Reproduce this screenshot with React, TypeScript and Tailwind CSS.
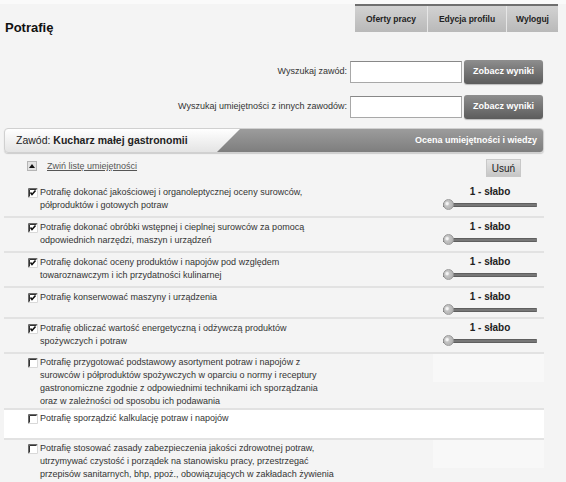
import React from 'react'

interface Skill {
  lines: string[]
  checked: boolean
  white?: boolean
}

const SKILLS: Skill[] = [
  {
    lines: ['Potrafię dokonać jakościowej i organoleptycznej oceny surowców,', 'półproduktów i gotowych potraw'],
    checked: true,
  },
  {
    lines: ['Potrafię dokonać obróbki wstępnej i cieplnej surowców za pomocą', 'odpowiednich narzędzi, maszyn i urządzeń'],
    checked: true,
  },
  {
    lines: ['Potrafię dokonać oceny produktów i napojów pod względem', 'towaroznawczym i ich przydatności kulinarnej'],
    checked: true,
  },
  { lines: ['Potrafię konserwować maszyny i urządzenia'], checked: true },
  {
    lines: ['Potrafię obliczać wartość energetyczną i odżywczą produktów', 'spożywczych i potraw'],
    checked: true,
  },
  {
    lines: [
      'Potrafię przygotować podstawowy asortyment potraw i napojów z',
      'surowców i półproduktów spożywczych w oparciu o normy i receptury',
      'gastronomiczne zgodnie z odpowiednimi technikami ich sporządzania',
      'oraz w zależności od sposobu ich podawania',
    ],
    checked: false,
  },
  { lines: ['Potrafię sporządzić kalkulację potraw i napojów'], checked: false, white: true },
  {
    lines: [
      'Potrafię stosować zasady zabezpieczenia jakości zdrowotnej potraw,',
      'utrzymywać czystość i porządek na stanowisku pracy, przestrzegać',
      'przepisów sanitarnych, bhp, ppoż., obowiązujących w zakładach żywienia',
      'zbiorowego',
    ],
    checked: false,
  },
]

function Checkbox({ checked }: { checked: boolean }) {
  return (
    <svg width="10" height="10" viewBox="0 0 10 10" className="mt-[1.5px] shrink-0">
      <rect x="0" y="0" width="10" height="10" fill="#fff" />
      <path d="M0.5 9.5V0.5H9.5" fill="none" stroke="#6a6a6a" strokeWidth="1" />
      <path d="M1.5 8.5V1.5H8.5" fill="none" stroke="#333" strokeWidth="1" />
      <path d="M9.5 0.5V9.5H0.5" fill="none" stroke="#d8d8d8" strokeWidth="1" />
      {checked && <path d="M2.5 4.5L4 6.5L7.5 2.5" fill="none" stroke="#111" strokeWidth="1.6" />}
    </svg>
  )
}

function Slider() {
  return (
    <div className="flex w-[111px] shrink-0 flex-col pl-[10px] pr-[7px] pt-[2px]">
      <div className="text-center text-[10px] font-bold leading-[13px] text-[#222]">1 - słabo</div>
      <div className="relative flex h-[13px] items-center">
        <div className="h-[4px] w-full rounded-r-[1px] border-y border-[#5f5f5f] bg-[#777]" />
        <div className="absolute left-0 top-[1px] h-[11px] w-[11px] rounded-full border border-[#9a9a9a] bg-[radial-gradient(circle_at_35%_40%,#f4f4f4_0,#f4f4f4_12%,#c4c4c4_30%,#a8a8a8_100%)]" />
      </div>
    </div>
  )
}

export default function App() {
  return (
    <div className="h-[482px] w-[566px] overflow-hidden bg-[#f4f4f4] font-['Liberation_Sans',Arial,sans-serif] text-[#333]">
      {/* nagłówek */}
      <div className="h-[4px] bg-[#fafafa]" />
      <div className="flex h-[56px] items-start justify-between">
        <h1 className="pl-[5px] pt-[16px] text-[13px] font-bold leading-[16px] text-[#111]">Potrafię</h1>
        <div className="mr-[8px] flex h-[28px] border-t-2 border-[#6f6f6f] text-[8.5px] font-bold text-[#222]">
          <div className="flex w-[73px] items-center justify-center border-r border-[#e6e6e6] bg-gradient-to-b from-[#d2d2d2] to-[#b9b9b9]">
            Oferty pracy
          </div>
          <div className="flex w-[79px] items-center justify-center border-r border-[#e6e6e6] bg-gradient-to-b from-[#d2d2d2] to-[#b9b9b9]">
            Edycja profilu
          </div>
          <div className="flex w-[51px] items-center justify-center bg-gradient-to-b from-[#d2d2d2] to-[#b9b9b9]">
            Wyloguj
          </div>
        </div>
      </div>

      {/* wyszukiwanie */}
      <div className="flex flex-col gap-[11px] pr-[23px]">
        {['Wyszukaj zawód:', 'Wyszukaj umiejętności z innych zawodów:'].map((label) => (
          <div key={label} className="flex h-[24px] items-center justify-end">
            <span className="mr-[3px] text-[9px]">{label}</span>
            <div className="h-[22px] w-[112px] border border-[#a8a8a8] border-t-[#888] bg-white" />
            <button className="ml-[2px] h-[24px] w-[79px] rounded-[3px] bg-gradient-to-b from-[#8e8e8e] to-[#5c5c5c] text-[9px] font-bold text-white shadow-[0_1px_1px_#bbb]">
              Zobacz wyniki
            </button>
          </div>
        ))}
      </div>

      <div className="mx-[4px] mt-[9px] w-[540px]">
        {/* pasek zawodu */}
        <div className="flex h-[25px] overflow-hidden rounded-[4px] border border-[#d0d0d0] bg-gradient-to-b from-white to-[#e4e4e4] shadow-[0_1px_1px_#ccc]">
          <div className="flex flex-1 items-center pl-[11px] text-[10.5px] text-[#222]">
            Zawód:&nbsp;<span className="font-bold">Kucharz małej gastronomii</span>
          </div>
          <div className="flex w-[326px] items-center justify-end bg-gradient-to-b from-[#9c9c9c] to-[#7e7e7e] pr-[6px] text-[9px] font-bold text-white [clip-path:polygon(23px_0,100%_0,100%_100%,0_100%)]">
            Ocena umiejętności i wiedzy
          </div>
        </div>

        {/* zwiń */}
        <div className="flex h-[30px] items-start justify-between pl-[23px] pr-[23px]">
          <div className="flex items-center pt-[7px]">
            <div className="flex h-[10px] w-[10px] items-center justify-center border border-[#b5b5b5] bg-[#e2e2e2]">
              <svg width="6" height="4" viewBox="0 0 6 4">
                <path d="M3 0L6 4H0Z" fill="#111" />
              </svg>
            </div>
            <span className="ml-[10px] text-[9px] leading-[12px] text-[#555] underline">Zwiń listę umiejętności</span>
          </div>
          <button className="mt-[6px] h-[18px] w-[35px] border border-[#c8c8c8] bg-gradient-to-b from-[#e4e4e4] to-[#c6c6c6] text-[10px] text-[#222]">
            Usuń
          </button>
        </div>

        {/* lista umiejętności */}
        {SKILLS.map((s, idx) => {
          const pad = s.checked ? (s.lines.length > 1 ? 'pb-[4px]' : 'pb-[1px]') : 'pb-0'
          return (
            <div
              key={idx}
              className={`flex items-start justify-between border-b-2 border-[#e2e2e2] ${pad} ${s.white ? 'bg-white' : ''}`}
            >
              <div className={`flex gap-[2px] pl-[24px] ${s.checked ? 'mt-[3px]' : 'mt-[2px]'}`}>
                <Checkbox checked={s.checked} />
                <div className="whitespace-nowrap text-[9px] leading-[13px]">
                  {s.lines.map((l) => (
                    <div key={l}>{l}</div>
                  ))}
                </div>
              </div>
              {s.checked ? (
                <Slider />
              ) : (
                <div className={`h-[28px] w-[111px] shrink-0 ${s.white ? '' : 'bg-[#f8f8f8]'}`} />
              )}
            </div>
          )
        })}
      </div>
    </div>
  )
}
